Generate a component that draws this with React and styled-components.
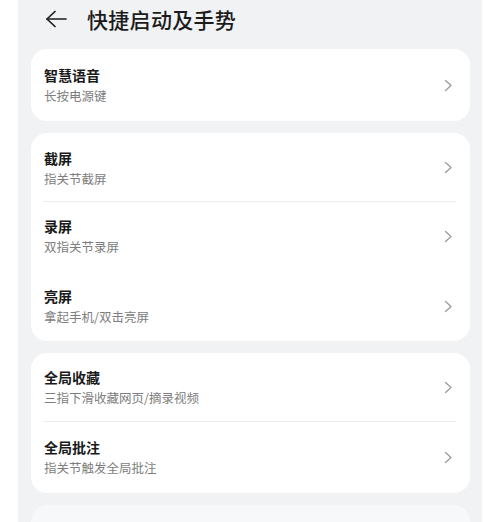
import React from "react";
import styled, { createGlobalStyle } from "styled-components";

const GlobalStyle = createGlobalStyle`
  html, body {
    margin: 0;
    padding: 0;
    background: #ffffff;
  }
  body {
    font-family: "Noto Sans CJK SC", "Noto Sans", sans-serif;
  }
`;

const Screen = styled.div`
  width: 464px;
  height: 522px;
  margin-left: 18px;
  background: #f1f2f4;
  overflow: hidden;
`;

const Header = styled.div`
  display: flex;
  align-items: center;
  height: 38px;
  padding-left: 27px;
  gap: 20px;
`;

const Title = styled.h1`
  margin: 0;
  font-size: 21px;
  font-weight: 500;
  color: #1c1c1c;
  letter-spacing: 0.3px;
`;

const CardList = styled.div`
  display: flex;
  flex-direction: column;
  gap: 12px;
  margin: 11px 12px 0 13px;
`;

const Card = styled.div`
  background: #ffffff;
  border-radius: 16px;
  opacity: ${(p) => (p.$faded ? 0.45 : 1)};
`;

const Row = styled.div`
  position: relative;
  display: flex;
  align-items: center;
  justify-content: space-between;
  height: ${(p) => p.$h}px;
  padding: 0 17px 0 13px;

  ${(p) =>
    p.$divider &&
    `
    &::after {
      content: "";
      position: absolute;
      left: 12px;
      right: 14px;
      bottom: 0;
      height: 1px;
      background: #ececec;
    }
  `}
`;

const TextBlock = styled.div`
  display: flex;
  flex-direction: column;
  padding-top: ${(p) => p.$shift || 0}px;
`;

const ItemTitle = styled.div`
  font-size: 14px;
  line-height: 20px;
  font-weight: 700;
  color: ${(p) => (p.$faint ? "#e6e6e6" : "#1a1a1a")};
`;

const ItemSub = styled.div`
  font-size: 12.5px;
  line-height: 21px;
  color: #7d7d7d;
`;

const Chevron = () => (
  <svg width="9" height="13" viewBox="0 0 9 13" fill="none">
    <polyline
      points="1.5,1.5 7,6.5 1.5,11.5"
      stroke="#9a9a9a"
      strokeWidth="1.3"
      strokeLinecap="round"
      strokeLinejoin="round"
    />
  </svg>
);

const BackArrow = () => (
  <svg width="22" height="18" viewBox="0 0 22 18" fill="none">
    <line x1="2" y1="9" x2="21" y2="9" stroke="#1c1c1c" strokeWidth="1.7" strokeLinecap="round" />
    <polyline
      points="10,1.5 2,9 10,16.5"
      stroke="#1c1c1c"
      strokeWidth="1.7"
      strokeLinecap="round"
      strokeLinejoin="round"
    />
  </svg>
);

const groups = [
  {
    rows: [{ title: "智慧语音", sub: "长按电源键", h: 72 }],
  },
  {
    rows: [
      { title: "截屏", sub: "指关节截屏", h: 69, divider: true, shift: 2 },
      { title: "录屏", sub: "双指关节录屏", h: 69 },
      { title: "亮屏", sub: "拿起手机/双击亮屏", h: 70 },
    ],
  },
  {
    rows: [
      { title: "全局收藏", sub: "三指下滑收藏网页/摘录视频", h: 69, divider: true },
      { title: "全局批注", sub: "指关节触发全局批注", h: 71 },
    ],
  },
];

export default function App() {
  return (
    <>
      <GlobalStyle />
      <Screen>
        <Header>
          <BackArrow />
          <Title>快捷启动及手势</Title>
        </Header>
        <CardList>
          {groups.map((group, gi) => (
            <Card key={gi}>
              {group.rows.map((row) => (
                <Row key={row.title} $h={row.h} $divider={row.divider}>
                  <TextBlock $shift={row.shift}>
                    <ItemTitle>{row.title}</ItemTitle>
                    <ItemSub>{row.sub}</ItemSub>
                  </TextBlock>
                  <Chevron />
                </Row>
              ))}
            </Card>
          ))}
          <Card $faded>
            <Row $h={60}>
              <TextBlock $shift={4}>
                <ItemTitle $faint>智能语音助手</ItemTitle>
              </TextBlock>
            </Row>
          </Card>
        </CardList>
      </Screen>
    </>
  );
}
